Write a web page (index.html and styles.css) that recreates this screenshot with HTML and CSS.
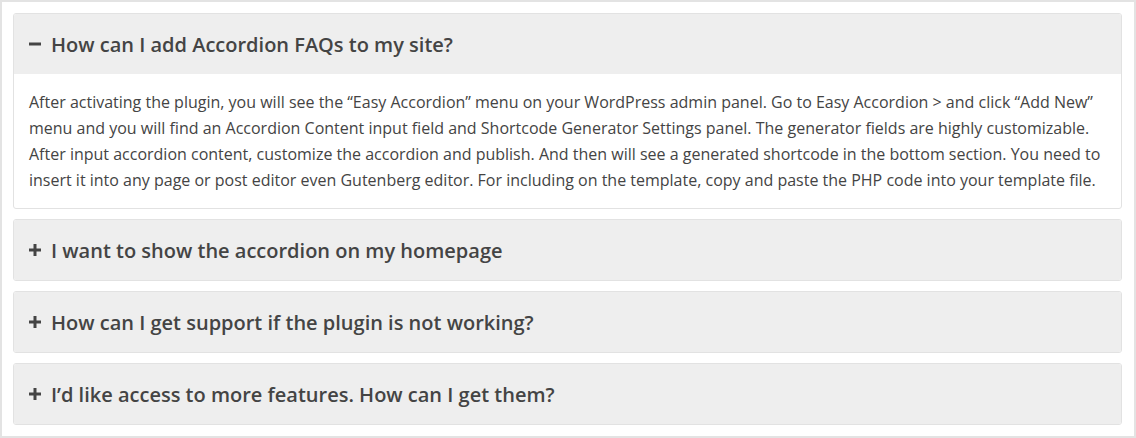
FILE: index.html
```html
<!DOCTYPE html>
<html lang="en">
<head>
    <meta charset="UTF-8">
    <meta name="viewport" content="width=device-width, initial-scale=1.0">
    <title>Accordion FAQs</title>
    <link rel="stylesheet" href="styles.css">
</head>
<body>
    <div class="faq-frame">
        <div class="faq-item open">
            <div class="faq-title">
                <svg class="faq-icon" viewBox="0 0 12 12"><rect x="0" y="4.5" width="12" height="3"/></svg>
                <span>How can I add Accordion FAQs to my site?</span>
            </div>
            <div class="faq-body">
                After activating the plugin, you will see the “Easy Accordion” menu on your WordPress admin panel. Go to Easy Accordion &gt; and click “Add New” menu and you will find an Accordion Content input field and Shortcode Generator Settings panel. The generator fields are highly customizable. After input accordion content, customize the accordion and publish. And then will see a generated shortcode in the bottom section. You need to insert it into any page or post editor even Gutenberg editor. For including on the template, copy and paste the PHP code into your template file.
            </div>
        </div>
        <div class="faq-item">
            <div class="faq-title">
                <svg class="faq-icon" viewBox="0 0 12 12"><rect x="0" y="4.5" width="12" height="3"/><rect x="4.5" y="0" width="3" height="12"/></svg>
                <span>I want to show the accordion on my homepage</span>
            </div>
        </div>
        <div class="faq-item">
            <div class="faq-title">
                <svg class="faq-icon" viewBox="0 0 12 12"><rect x="0" y="4.5" width="12" height="3"/><rect x="4.5" y="0" width="3" height="12"/></svg>
                <span>How can I get support if the plugin is not working?</span>
            </div>
        </div>
        <div class="faq-item">
            <div class="faq-title">
                <svg class="faq-icon" viewBox="0 0 12 12"><rect x="0" y="4.5" width="12" height="3"/><rect x="4.5" y="0" width="3" height="12"/></svg>
                <span>I’d like access to more features. How can I get them?</span>
            </div>
        </div>
    </div>
</body>
</html>
```

FILE: styles.css
```css
body {
    margin: 0;
    font-family: "Open Sans", "Noto Sans", sans-serif;
    color: #444;
    background: #fff;
}
.faq-frame {
    width: 1136px;
    height: 438px;
    box-sizing: border-box;
    border: 2px solid #e3e3e3;
    padding: 11px 12px 0 11px;
    display: flex;
    flex-direction: column;
    gap: 10px;
}
.faq-item {
    border: 1px solid #e2e2e2;
    border-radius: 3px;
    overflow: hidden;
}
.faq-title {
    background: #eeeeee;
    height: 60px;
    box-sizing: border-box;
    padding: 0 15px;
    display: flex;
    align-items: center;
    gap: 10px;
    font-size: 20px;
    font-weight: 600;
    color: #444;
}
.faq-icon {
    width: 12px;
    height: 12px;
    fill: #444;
    flex-shrink: 0;
}
.faq-body {
    padding: 15px;
    font-size: 16px;
    line-height: 26px;
    color: #444;
}
```
